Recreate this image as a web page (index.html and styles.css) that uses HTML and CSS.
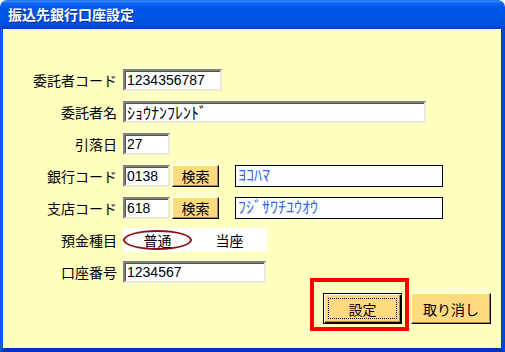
FILE: index.html
```html
<!DOCTYPE html>
<html lang="ja">
<head>
    <meta charset="UTF-8" />
    <meta name="viewport" content="width=device-width, initial-scale=1.0" />
    <title>振込先銀行口座設定</title>
    <link rel="stylesheet" href="styles.css">
</head>
<body>
    <div class="window">
        <div class="titlebar">
            <span class="title">振込先銀行口座設定</span>
        </div>
        <div class="frame">
            <div class="client">
                <div class="form">
                    <label class="label">委託者コード</label>
                    <div class="field"><input class="box w-consignor" type="text" value="1234356787"></div>

                    <label class="label">委託者名</label>
                    <div class="field"><input class="box w-name kana" type="text" value="ｼｮｳﾅﾝﾌﾚﾝﾄﾞ"></div>

                    <label class="label">引落日</label>
                    <div class="field"><input class="box w-short" type="text" value="27"></div>

                    <label class="label">銀行コード</label>
                    <div class="field">
                        <input class="box w-short" type="text" value="0138">
                        <button class="btn btn-search" type="button">検索</button>
                        <span class="result kana">ﾖｺﾊﾏ</span>
                    </div>

                    <label class="label">支店コード</label>
                    <div class="field">
                        <input class="box w-short" type="text" value="618">
                        <button class="btn btn-search" type="button">検索</button>
                        <span class="result kana">ﾌｼﾞｻﾜﾁﾕｳｵｳ</span>
                    </div>

                    <label class="label">預金種目</label>
                    <div class="field">
                        <div class="kind">
                            <span class="kind-option selected">普通</span>
                            <span class="kind-option">当座</span>
                        </div>
                    </div>

                    <label class="label">口座番号</label>
                    <div class="field"><input class="box w-account" type="text" value="1234567"></div>
                </div>

                <div class="actions">
                    <div class="marked">
                        <button class="btn btn-default" type="button">設定</button>
                    </div>
                    <button class="btn btn-cancel" type="button">取り消し</button>
                </div>
            </div>
        </div>
    </div>
</body>
</html>
```

FILE: styles.css
```css
html {
    font: 14px/1 "Liberation Sans", "Noto Sans CJK JP", sans-serif;
}

body {
    margin: 0;
    padding: 0;
    background-color: #fff;
    color: #000;
}

.window {
    display: flex;
    flex-direction: column;
    width: 505px;
    height: 352px;
    border-radius: 7px 7px 0 0;
    overflow: hidden;
}

.titlebar {
    display: flex;
    align-items: center;
    height: 29px;
    padding: 0 8px 1px;
    box-sizing: border-box;
    background: linear-gradient(to bottom, #0a5ee8 0, #3f8fff 1px, #0c68f6 3px, #0057ea 7px, #0055e5 20px, #004ad9 26px, #0041cc 29px);
}

.title {
    color: #fff;
    font-weight: bold;
    font-size: 14px;
    font-family: "Noto Sans CJK JP", sans-serif;
    text-shadow: 1px 1px #0a2a8a;
}

.frame {
    display: flex;
    flex: 1;
    border-style: solid;
    border-width: 0 4px 4px 3px;
    border-color: #0055e5 #0046d8 #0034c0 #0a5ae8;
    box-shadow: inset 0 -1px #001a90;
}

.client {
    display: flex;
    flex-direction: column;
    flex: 1;
    padding: 40px 10px 0 0;
    background-color: #ffffc0;
}

.form {
    display: grid;
    grid-template-columns: 114px 1fr;
    grid-auto-rows: 22px;
    column-gap: 6px;
    row-gap: 10px;
}

.label {
    display: flex;
    align-items: center;
    justify-content: flex-end;
    font-family: "Noto Sans CJK JP", sans-serif;
    font-size: 14px;
}

.field {
    display: flex;
    align-items: center;
}

.box {
    box-sizing: border-box;
    height: 22px;
    margin: 0;
    padding: 0 2px;
    border: 2px solid;
    border-color: #808080 #ece9d8 #ece9d8 #808080;
    box-shadow: inset 1px 1px #555;
    background-color: #fff;
    font: 14px "Liberation Sans", "Noto Sans CJK JP", sans-serif;
    color: #000;
    outline: none;
}

.w-consignor {
    width: 99px;
}

.w-name {
    width: 303px;
}

.w-short {
    width: 47px;
}

.w-account {
    width: 143px;
}

.btn {
    box-sizing: border-box;
    margin: 0;
    padding: 0;
    border: 1px solid;
    border-color: #fff #000 #000 #fff;
    box-shadow: inset -1px -1px #a08850;
    background-color: #ffda80;
    font: 14px "Noto Sans CJK JP", sans-serif;
    color: #000;
}

.btn-search {
    width: 47px;
    height: 22px;
    margin-left: 2px;
}

.result {
    display: flex;
    align-items: center;
    box-sizing: border-box;
    width: 208px;
    height: 22px;
    margin-left: 16px;
    padding: 0 2px 1px;
    border: 1px solid #000;
    background-color: #fff;
    color: #3366ee;
}

.kana {
    font-size: 16px;
}

.kind {
    display: flex;
    align-items: center;
    width: 144px;
    height: 24px;
    margin: -1px 0;
    background-color: #fff;
    font-family: "Noto Sans CJK JP", sans-serif;
}

.kind-option {
    display: flex;
    align-items: center;
    justify-content: center;
    flex: 1;
    height: 20px;
}

.kind-option.selected {
    flex: 0 0 69px;
    box-sizing: border-box;
    border: 2px solid #8b1010;
    border-radius: 50%;
}

.actions {
    display: flex;
    justify-content: flex-end;
    align-items: flex-start;
    gap: 9px;
    margin-top: 10px;
}

.marked {
    position: relative;
    display: flex;
}

.marked::after {
    content: "";
    position: absolute;
    top: -15px;
    right: -7px;
    bottom: -7px;
    left: -13px;
    border: 4px solid #f00;
}

.btn-default {
    position: relative;
    width: 79px;
    height: 31px;
    border-color: #000;
    box-shadow: inset 1px 1px #fff, inset -1px -1px #000, inset -2px -2px #a08850;
}

.btn-default::before {
    content: "";
    position: absolute;
    top: 4px;
    right: 4px;
    bottom: 4px;
    left: 4px;
    border: 1px dotted #000;
}

.btn-cancel {
    width: 80px;
    height: 31px;
}
```
